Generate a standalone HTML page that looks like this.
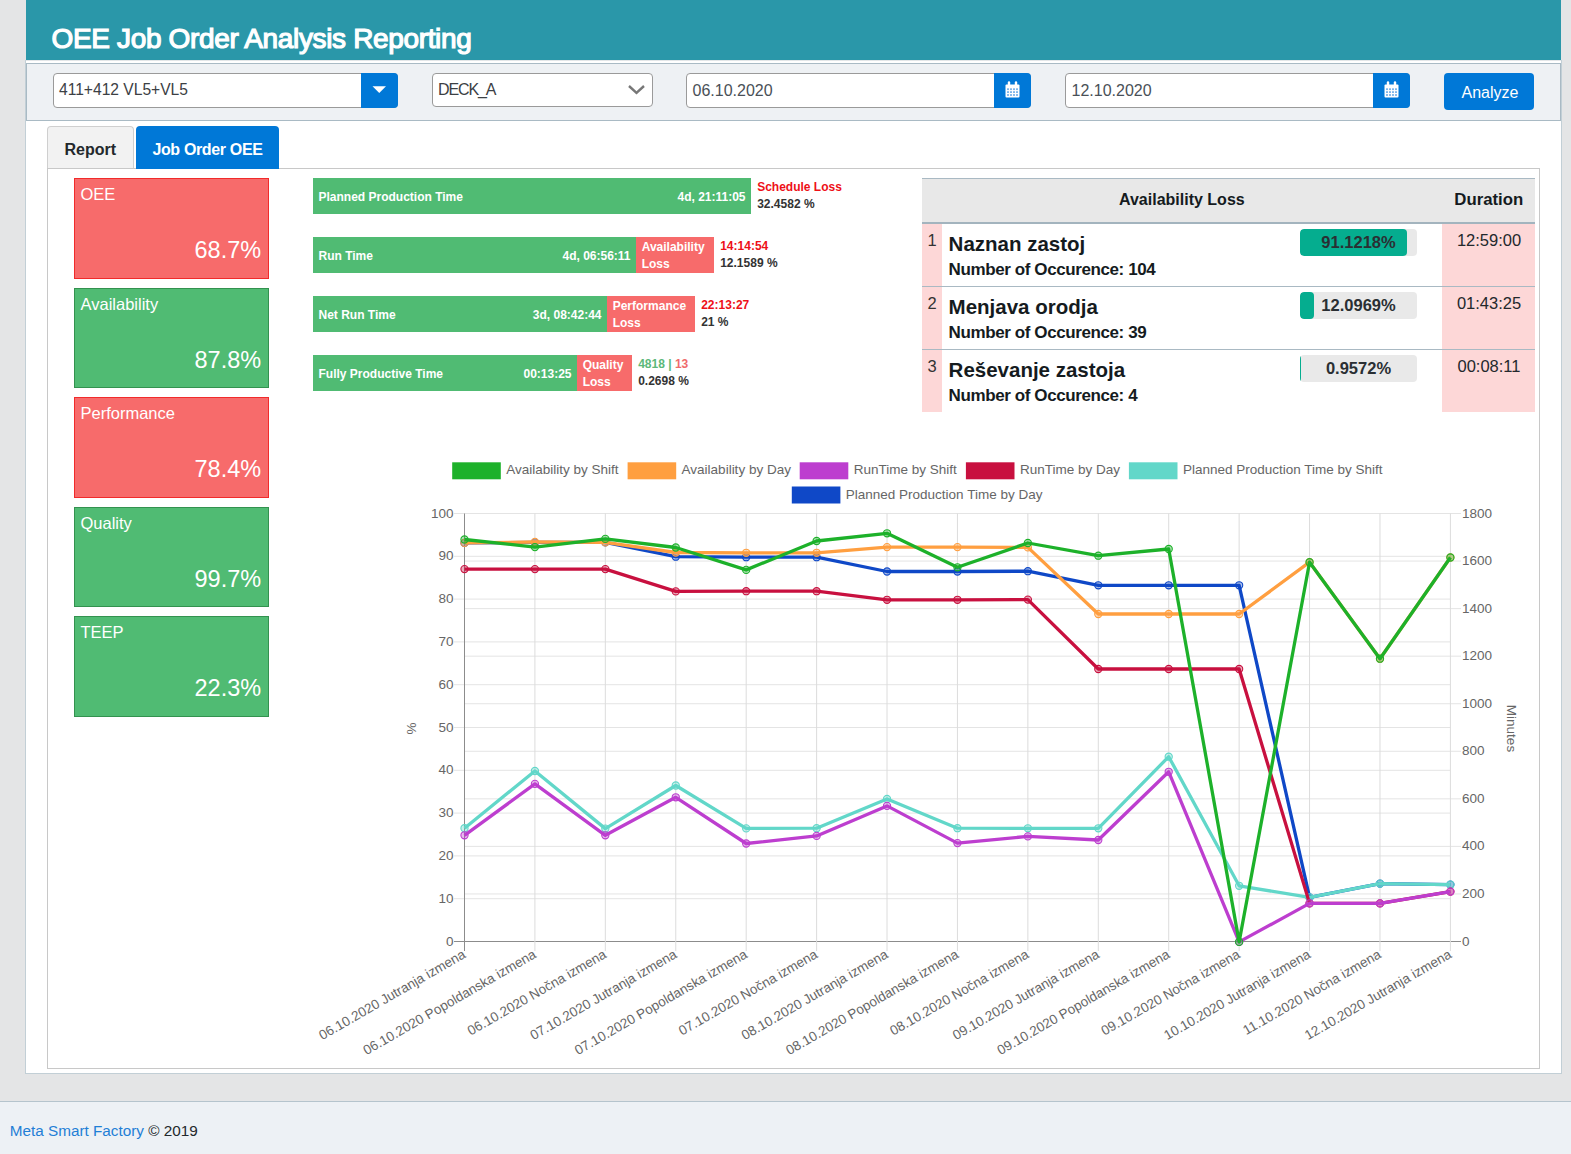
<!DOCTYPE html>
<html><head><meta charset="utf-8"><title>OEE Job Order Analysis Reporting</title>
<style>
*{box-sizing:border-box}
html,body{margin:0;padding:0}
body{width:1571px;height:1154px;position:relative;overflow:hidden;background:#e4e5e6;font-family:"Liberation Sans", sans-serif;color:#23282c}
.abs{position:absolute}
.t{position:absolute;line-height:0;white-space:nowrap}
.inp{background:#fff;border:1px solid #9a9a9a;border-radius:4px}
.btnb{background:#0078d7;border-radius:0 4px 4px 0}
.red{background:#f76b6b;border:1px solid #f12b2b}
.grn{background:#50bb73;border:1px solid #33924f}
.sg{background:#50bb73}
.sr{background:#f76b6b}
</style></head><body>
<div class="abs" style="left:26px;top:0;width:1535px;height:60px;background:#2a97a9"></div>
<div class="t" style="left:51.5px;top:39.00px;font-size:28px;font-weight:400;color:#fff;letter-spacing:-0.35px;-webkit-text-stroke:1.2px #fff;">OEE Job Order Analysis Reporting</div>
<div class="abs" style="left:25px;top:60px;width:1537px;height:1014px;background:#fff;border:1px solid #c2cfd6;border-top:none"></div>
<div class="abs" style="left:26px;top:60px;width:1535px;height:1px;background:#e3e6e8"></div>
<div class="abs" style="left:26px;top:63px;width:1535px;height:58px;background:#eef1f4;border:1px solid #a9bac4"></div>
<div class="abs inp" style="left:53px;top:73px;width:345px;height:35px"></div>
<div class="t" style="left:59px;top:90.00px;font-size:15.6px;font-weight:400;color:#3c4044;">411+412 VL5+VL5</div>
<div class="abs btnb" style="left:361px;top:73px;width:37px;height:35px"><svg width="37" height="35" style="position:absolute;left:0;top:0"><path d="M11.5 13.2 L25 13.2 L18.25 20 Z" fill="#fff"/></svg></div>
<div class="abs inp" style="left:432px;top:73px;width:221px;height:34px"><svg width="20" height="12" style="position:absolute;left:194px;top:9.5px"><path d="M2 2 L9.5 8.8 L17 2" fill="none" stroke="#777" stroke-width="2.4"/></svg></div>
<div class="t" style="left:438px;top:90.00px;font-size:16px;font-weight:400;color:#3c4044;letter-spacing:-1.1px;">DECK_A</div>
<div class="abs inp" style="left:686px;top:73px;width:345px;height:35px"></div>
<div class="t" style="left:692.5px;top:91.00px;font-size:16px;font-weight:400;color:#495057;">06.10.2020</div>
<div class="abs btnb" style="left:994px;top:73px;width:37px;height:35px"><svg width="37" height="35" style="position:absolute;left:0;top:0"><g fill="#fff"><rect x="11.5" y="11.5" width="14" height="13" rx="1"/><rect x="13.8" y="8.3" width="2.4" height="4.5" rx="1.2"/><rect x="20.8" y="8.3" width="2.4" height="4.5" rx="1.2"/></g><g fill="#7fb6ea"><rect x="13" y="15.3" width="2" height="1.8"/><rect x="16" y="15.3" width="2" height="1.8"/><rect x="19" y="15.3" width="2" height="1.8"/><rect x="22" y="15.3" width="2" height="1.8"/><rect x="13" y="18.2" width="2" height="1.8"/><rect x="16" y="18.2" width="2" height="1.8"/><rect x="19" y="18.2" width="2" height="1.8"/><rect x="22" y="18.2" width="2" height="1.8"/><rect x="13" y="21.1" width="2" height="1.8"/><rect x="16" y="21.1" width="2" height="1.8"/><rect x="19" y="21.1" width="2" height="1.8"/><rect x="22" y="21.1" width="2" height="1.8"/></g></svg></div>
<div class="abs inp" style="left:1065px;top:73px;width:345px;height:35px"></div>
<div class="t" style="left:1071.5px;top:91.00px;font-size:16px;font-weight:400;color:#495057;">12.10.2020</div>
<div class="abs btnb" style="left:1373px;top:73px;width:37px;height:35px"><svg width="37" height="35" style="position:absolute;left:0;top:0"><g fill="#fff"><rect x="11.5" y="11.5" width="14" height="13" rx="1"/><rect x="13.8" y="8.3" width="2.4" height="4.5" rx="1.2"/><rect x="20.8" y="8.3" width="2.4" height="4.5" rx="1.2"/></g><g fill="#7fb6ea"><rect x="13" y="15.3" width="2" height="1.8"/><rect x="16" y="15.3" width="2" height="1.8"/><rect x="19" y="15.3" width="2" height="1.8"/><rect x="22" y="15.3" width="2" height="1.8"/><rect x="13" y="18.2" width="2" height="1.8"/><rect x="16" y="18.2" width="2" height="1.8"/><rect x="19" y="18.2" width="2" height="1.8"/><rect x="22" y="18.2" width="2" height="1.8"/><rect x="13" y="21.1" width="2" height="1.8"/><rect x="16" y="21.1" width="2" height="1.8"/><rect x="19" y="21.1" width="2" height="1.8"/><rect x="22" y="21.1" width="2" height="1.8"/></g></svg></div>
<div class="abs" style="left:1444px;top:73px;width:90px;height:37px;background:#0078d7;border-radius:4px"></div>
<div class="t" style="left:1461.5px;top:93.00px;font-size:16px;font-weight:400;color:#fff;">Analyze</div>
<div class="abs" style="left:47px;top:168px;width:1493px;height:901px;border:1px solid #c8c8c8"></div>
<div class="abs" style="left:47px;top:126px;width:87px;height:42px;background:#f2f2f2;border:1px solid #cfcfcf;border-bottom:none;border-radius:4px 4px 0 0"></div>
<div class="t" style="left:64.5px;top:150.00px;font-size:16px;font-weight:700;color:#23282c;">Report</div>
<div class="abs" style="left:136px;top:126px;width:143px;height:43px;background:#0078d7;border-radius:4px 4px 0 0"></div>
<div class="t" style="left:152.4px;top:150.00px;font-size:16px;font-weight:700;color:#fff;letter-spacing:-0.35px;">Job Order OEE</div>
<div class="abs red" style="left:74px;top:178px;width:195px;height:101px"></div>
<div class="t" style="left:80.5px;top:194.00px;font-size:16.5px;font-weight:400;color:#fff;">OEE</div>
<div class="t" style="left:261.2px;transform:translateX(-100%);top:250.00px;font-size:23.5px;font-weight:400;color:#fff;">68.7%</div>
<div class="abs grn" style="left:74px;top:288px;width:195px;height:100px"></div>
<div class="t" style="left:80.5px;top:304.00px;font-size:16.5px;font-weight:400;color:#fff;">Availability</div>
<div class="t" style="left:261.2px;transform:translateX(-100%);top:360.00px;font-size:23.5px;font-weight:400;color:#fff;">87.8%</div>
<div class="abs red" style="left:74px;top:397px;width:195px;height:101px"></div>
<div class="t" style="left:80.5px;top:413.00px;font-size:16.5px;font-weight:400;color:#fff;">Performance</div>
<div class="t" style="left:261.2px;transform:translateX(-100%);top:469.00px;font-size:23.5px;font-weight:400;color:#fff;">78.4%</div>
<div class="abs grn" style="left:74px;top:507px;width:195px;height:100px"></div>
<div class="t" style="left:80.5px;top:523.00px;font-size:16.5px;font-weight:400;color:#fff;">Quality</div>
<div class="t" style="left:261.2px;transform:translateX(-100%);top:579.00px;font-size:23.5px;font-weight:400;color:#fff;">99.7%</div>
<div class="abs grn" style="left:74px;top:616px;width:195px;height:101px"></div>
<div class="t" style="left:80.5px;top:632.00px;font-size:16.5px;font-weight:400;color:#fff;">TEEP</div>
<div class="t" style="left:261.2px;transform:translateX(-100%);top:688.00px;font-size:23.5px;font-weight:400;color:#fff;">22.3%</div>
<div class="abs sg" style="left:313px;top:178px;width:438px;height:36px"></div>
<div class="t" style="left:318.5px;top:197.00px;font-size:12px;font-weight:700;color:#fff;">Planned Production Time</div>
<div class="t" style="left:745.5px;transform:translateX(-100%);top:197.00px;font-size:12px;font-weight:700;color:#fff;">4d, 21:11:05</div>
<div class="t" style="left:757.2px;top:187.00px;font-size:12px;font-weight:700;color:#ee1018;">Schedule Loss</div>
<div class="t" style="left:757.2px;top:204.00px;font-size:12px;font-weight:700;color:#333;">32.4582 %</div>
<div class="abs sg" style="left:313px;top:237px;width:323px;height:36px"></div>
<div class="t" style="left:318.5px;top:256.00px;font-size:12px;font-weight:700;color:#fff;">Run Time</div>
<div class="t" style="left:630.5px;transform:translateX(-100%);top:256.00px;font-size:12px;font-weight:700;color:#fff;">4d, 06:56:11</div>
<div class="abs sr" style="left:636px;top:237px;width:78px;height:36px"></div>
<div class="t" style="left:641.7px;top:247.00px;font-size:12px;font-weight:700;color:#fff;">Availability</div>
<div class="t" style="left:641.7px;top:264.00px;font-size:12px;font-weight:700;color:#fff;">Loss</div>
<div class="t" style="left:720.2px;top:246.00px;font-size:12px;font-weight:700;color:#ee1018;">14:14:54</div>
<div class="t" style="left:720.2px;top:263.00px;font-size:12px;font-weight:700;color:#333;">12.1589 %</div>
<div class="abs sg" style="left:313px;top:296px;width:294px;height:36px"></div>
<div class="t" style="left:318.5px;top:315.00px;font-size:12px;font-weight:700;color:#fff;">Net Run Time</div>
<div class="t" style="left:601.5px;transform:translateX(-100%);top:315.00px;font-size:12px;font-weight:700;color:#fff;">3d, 08:42:44</div>
<div class="abs sr" style="left:607px;top:296px;width:88px;height:36px"></div>
<div class="t" style="left:612.7px;top:306.00px;font-size:12px;font-weight:700;color:#fff;">Performance</div>
<div class="t" style="left:612.7px;top:323.00px;font-size:12px;font-weight:700;color:#fff;">Loss</div>
<div class="t" style="left:701.2px;top:305.00px;font-size:12px;font-weight:700;color:#ee1018;">22:13:27</div>
<div class="t" style="left:701.2px;top:322.00px;font-size:12px;font-weight:700;color:#333;">21 %</div>
<div class="abs sg" style="left:313px;top:355px;width:264px;height:36px"></div>
<div class="t" style="left:318.5px;top:374.00px;font-size:12px;font-weight:700;color:#fff;">Fully Productive Time</div>
<div class="t" style="left:571.5px;transform:translateX(-100%);top:374.00px;font-size:12px;font-weight:700;color:#fff;">00:13:25</div>
<div class="abs sr" style="left:577px;top:355px;width:55px;height:36px"></div>
<div class="t" style="left:582.7px;top:365.00px;font-size:12px;font-weight:700;color:#fff;">Quality</div>
<div class="t" style="left:582.7px;top:382.00px;font-size:12px;font-weight:700;color:#fff;">Loss</div>
<div class="t" style="left:638.2px;top:364.00px;font-size:12px;font-weight:700;color:#ee1018;"><span style="color:#5cb87a;font-weight:600">4818 | </span><span style="color:#f06b6b">13</span></div>
<div class="t" style="left:638.2px;top:381.00px;font-size:12px;font-weight:700;color:#333;">0.2698 %</div>
<div class="abs" style="left:922px;top:178px;width:613px;height:46px;background:#e8e8e8;border-top:1px solid #a9b9c3;border-bottom:2px solid #a3b4be"></div>
<div class="t" style="left:1119px;top:200.00px;font-size:16px;font-weight:700;color:#151b1e;">Availability Loss</div>
<div class="t" style="left:1454.3px;top:200.00px;font-size:16.8px;font-weight:700;color:#151b1e;">Duration</div>
<div class="abs" style="left:922px;top:224px;width:613px;height:63px;border-bottom:1px solid #a9b9c3;"></div>
<div class="abs" style="left:922px;top:224px;width:20px;height:62px;background:#fdd7d7"></div>
<div class="abs" style="left:1442px;top:224px;width:93px;height:62px;background:#fdd7d7"></div>
<div class="t" style="left:932px;transform:translateX(-50%);top:240.00px;font-size:16.5px;font-weight:400;color:#333;">1</div>
<div class="t" style="left:948.6px;top:244.00px;font-size:20.5px;font-weight:700;color:#151b1e;">Naznan zastoj</div>
<div class="t" style="left:948.6px;top:270.00px;font-size:17px;font-weight:700;color:#151b1e;letter-spacing:-0.4px;">Number of Occurence: 104</div>
<div class="abs" style="left:1300px;top:229px;width:117px;height:27px;background:#e9e9e9;border-radius:4px;overflow:hidden"><div style="position:absolute;left:0;top:0;bottom:0;width:106.6px;background:#05ad8f;border-radius:4px"></div></div>
<div class="t" style="left:1358.5px;transform:translateX(-50%);top:242.00px;font-size:16.5px;font-weight:700;color:#2a2f33;">91.1218%</div>
<div class="t" style="left:1489px;transform:translateX(-50%);top:240.00px;font-size:16.5px;font-weight:400;color:#23282c;">12:59:00</div>
<div class="abs" style="left:922px;top:287px;width:613px;height:63px;border-bottom:1px solid #a9b9c3;"></div>
<div class="abs" style="left:922px;top:287px;width:20px;height:62px;background:#fdd7d7"></div>
<div class="abs" style="left:1442px;top:287px;width:93px;height:62px;background:#fdd7d7"></div>
<div class="t" style="left:932px;transform:translateX(-50%);top:303.00px;font-size:16.5px;font-weight:400;color:#333;">2</div>
<div class="t" style="left:948.6px;top:307.00px;font-size:20.5px;font-weight:700;color:#151b1e;">Menjava orodja</div>
<div class="t" style="left:948.6px;top:333.00px;font-size:17px;font-weight:700;color:#151b1e;letter-spacing:-0.4px;">Number of Occurence: 39</div>
<div class="abs" style="left:1300px;top:292px;width:117px;height:27px;background:#e9e9e9;border-radius:4px;overflow:hidden"><div style="position:absolute;left:0;top:0;bottom:0;width:14.15px;background:#05ad8f;border-radius:4px"></div></div>
<div class="t" style="left:1358.5px;transform:translateX(-50%);top:305.00px;font-size:16.5px;font-weight:700;color:#2a2f33;">12.0969%</div>
<div class="t" style="left:1489px;transform:translateX(-50%);top:303.00px;font-size:16.5px;font-weight:400;color:#23282c;">01:43:25</div>
<div class="abs" style="left:922px;top:350px;width:613px;height:62px;"></div>
<div class="abs" style="left:922px;top:350px;width:20px;height:62px;background:#fdd7d7"></div>
<div class="abs" style="left:1442px;top:350px;width:93px;height:62px;background:#fdd7d7"></div>
<div class="t" style="left:932px;transform:translateX(-50%);top:366.00px;font-size:16.5px;font-weight:400;color:#333;">3</div>
<div class="t" style="left:948.6px;top:370.00px;font-size:20.5px;font-weight:700;color:#151b1e;">Reševanje zastoja</div>
<div class="t" style="left:948.6px;top:396.00px;font-size:17px;font-weight:700;color:#151b1e;letter-spacing:-0.4px;">Number of Occurence: 4</div>
<div class="abs" style="left:1300px;top:355px;width:117px;height:27px;background:#e9e9e9;border-radius:4px;overflow:hidden"><div style="position:absolute;left:0;top:0;bottom:0;width:1.2px;background:#05ad8f;border-radius:0px"></div></div>
<div class="t" style="left:1358.5px;transform:translateX(-50%);top:368.00px;font-size:16.5px;font-weight:700;color:#2a2f33;">0.9572%</div>
<div class="t" style="left:1489px;transform:translateX(-50%);top:366.00px;font-size:16.5px;font-weight:400;color:#23282c;">00:08:11</div>
<div class="abs" style="left:0;top:1101px;width:1571px;height:53px;background:#edf1f5;border-top:1px solid #b5c4cd"></div>
<div class="t" style="left:9.7px;top:1131.00px;font-size:15.3px;font-weight:400;color:#23282c;"><span style="color:#1f7fd6">Meta Smart Factory</span> © 2019</div>
<svg width="1571" height="1154" viewBox="0 0 1571 1154" style="position:absolute;left:0;top:0;font-family:"Liberation Sans", sans-serif">
<line x1="454" y1="513.50" x2="1450.40" y2="513.50" stroke="#e4e4e4" stroke-width="1"/>
<text x="453.5" y="517.60" text-anchor="end" font-size="13.5" fill="#666">100</text>
<line x1="454" y1="556.30" x2="1450.40" y2="556.30" stroke="#e4e4e4" stroke-width="1"/>
<text x="453.5" y="560.40" text-anchor="end" font-size="13.5" fill="#666">90</text>
<line x1="454" y1="599.10" x2="1450.40" y2="599.10" stroke="#e4e4e4" stroke-width="1"/>
<text x="453.5" y="603.20" text-anchor="end" font-size="13.5" fill="#666">80</text>
<line x1="454" y1="641.90" x2="1450.40" y2="641.90" stroke="#e4e4e4" stroke-width="1"/>
<text x="453.5" y="646.00" text-anchor="end" font-size="13.5" fill="#666">70</text>
<line x1="454" y1="684.70" x2="1450.40" y2="684.70" stroke="#e4e4e4" stroke-width="1"/>
<text x="453.5" y="688.80" text-anchor="end" font-size="13.5" fill="#666">60</text>
<line x1="454" y1="727.50" x2="1450.40" y2="727.50" stroke="#e4e4e4" stroke-width="1"/>
<text x="453.5" y="731.60" text-anchor="end" font-size="13.5" fill="#666">50</text>
<line x1="454" y1="770.30" x2="1450.40" y2="770.30" stroke="#e4e4e4" stroke-width="1"/>
<text x="453.5" y="774.40" text-anchor="end" font-size="13.5" fill="#666">40</text>
<line x1="454" y1="813.10" x2="1450.40" y2="813.10" stroke="#e4e4e4" stroke-width="1"/>
<text x="453.5" y="817.20" text-anchor="end" font-size="13.5" fill="#666">30</text>
<line x1="454" y1="855.90" x2="1450.40" y2="855.90" stroke="#e4e4e4" stroke-width="1"/>
<text x="453.5" y="860.00" text-anchor="end" font-size="13.5" fill="#666">20</text>
<line x1="454" y1="898.70" x2="1450.40" y2="898.70" stroke="#e4e4e4" stroke-width="1"/>
<text x="453.5" y="902.80" text-anchor="end" font-size="13.5" fill="#666">10</text>
<line x1="454" y1="941.50" x2="1450.40" y2="941.50" stroke="#8c8c8c" stroke-width="1"/>
<text x="453.5" y="945.60" text-anchor="end" font-size="13.5" fill="#666">0</text>
<line x1="464.50" y1="513.50" x2="1461" y2="513.50" stroke="#e4e4e4" stroke-width="1"/>
<text x="1462" y="517.60" font-size="13.5" fill="#666">1800</text>
<line x1="464.50" y1="561.06" x2="1461" y2="561.06" stroke="#e4e4e4" stroke-width="1"/>
<text x="1462" y="565.16" font-size="13.5" fill="#666">1600</text>
<line x1="464.50" y1="608.61" x2="1461" y2="608.61" stroke="#e4e4e4" stroke-width="1"/>
<text x="1462" y="612.71" font-size="13.5" fill="#666">1400</text>
<line x1="464.50" y1="656.17" x2="1461" y2="656.17" stroke="#e4e4e4" stroke-width="1"/>
<text x="1462" y="660.27" font-size="13.5" fill="#666">1200</text>
<line x1="464.50" y1="703.72" x2="1461" y2="703.72" stroke="#e4e4e4" stroke-width="1"/>
<text x="1462" y="707.82" font-size="13.5" fill="#666">1000</text>
<line x1="464.50" y1="751.28" x2="1461" y2="751.28" stroke="#e4e4e4" stroke-width="1"/>
<text x="1462" y="755.38" font-size="13.5" fill="#666">800</text>
<line x1="464.50" y1="798.83" x2="1461" y2="798.83" stroke="#e4e4e4" stroke-width="1"/>
<text x="1462" y="802.93" font-size="13.5" fill="#666">600</text>
<line x1="464.50" y1="846.39" x2="1461" y2="846.39" stroke="#e4e4e4" stroke-width="1"/>
<text x="1462" y="850.49" font-size="13.5" fill="#666">400</text>
<line x1="464.50" y1="893.94" x2="1461" y2="893.94" stroke="#e4e4e4" stroke-width="1"/>
<text x="1462" y="898.04" font-size="13.5" fill="#666">200</text>
<line x1="464.50" y1="941.50" x2="1461" y2="941.50" stroke="#8c8c8c" stroke-width="1"/>
<text x="1462" y="945.60" font-size="13.5" fill="#666">0</text>
<line x1="464.50" y1="513.50" x2="464.50" y2="951" stroke="#8c8c8c" stroke-width="1"/>
<line x1="534.92" y1="513.50" x2="534.92" y2="951" stroke="#dcdcdc" stroke-width="1"/>
<line x1="605.34" y1="513.50" x2="605.34" y2="951" stroke="#dcdcdc" stroke-width="1"/>
<line x1="675.76" y1="513.50" x2="675.76" y2="951" stroke="#dcdcdc" stroke-width="1"/>
<line x1="746.19" y1="513.50" x2="746.19" y2="951" stroke="#dcdcdc" stroke-width="1"/>
<line x1="816.61" y1="513.50" x2="816.61" y2="951" stroke="#dcdcdc" stroke-width="1"/>
<line x1="887.03" y1="513.50" x2="887.03" y2="951" stroke="#dcdcdc" stroke-width="1"/>
<line x1="957.45" y1="513.50" x2="957.45" y2="951" stroke="#dcdcdc" stroke-width="1"/>
<line x1="1027.87" y1="513.50" x2="1027.87" y2="951" stroke="#dcdcdc" stroke-width="1"/>
<line x1="1098.29" y1="513.50" x2="1098.29" y2="951" stroke="#dcdcdc" stroke-width="1"/>
<line x1="1168.71" y1="513.50" x2="1168.71" y2="951" stroke="#dcdcdc" stroke-width="1"/>
<line x1="1239.14" y1="513.50" x2="1239.14" y2="951" stroke="#dcdcdc" stroke-width="1"/>
<line x1="1309.56" y1="513.50" x2="1309.56" y2="951" stroke="#dcdcdc" stroke-width="1"/>
<line x1="1379.98" y1="513.50" x2="1379.98" y2="951" stroke="#dcdcdc" stroke-width="1"/>
<line x1="1450.40" y1="513.50" x2="1450.40" y2="951" stroke="#dcdcdc" stroke-width="1"/>
<text x="466.50" y="957.00" text-anchor="end" font-size="13.5" fill="#666" transform="rotate(-30 466.50 957.00)">06.10.2020 Jutranja izmena</text>
<text x="536.92" y="957.00" text-anchor="end" font-size="13.5" fill="#666" transform="rotate(-30 536.92 957.00)">06.10.2020 Popoldanska izmena</text>
<text x="607.34" y="957.00" text-anchor="end" font-size="13.5" fill="#666" transform="rotate(-30 607.34 957.00)">06.10.2020 Nočna izmena</text>
<text x="677.76" y="957.00" text-anchor="end" font-size="13.5" fill="#666" transform="rotate(-30 677.76 957.00)">07.10.2020 Jutranja izmena</text>
<text x="748.19" y="957.00" text-anchor="end" font-size="13.5" fill="#666" transform="rotate(-30 748.19 957.00)">07.10.2020 Popoldanska izmena</text>
<text x="818.61" y="957.00" text-anchor="end" font-size="13.5" fill="#666" transform="rotate(-30 818.61 957.00)">07.10.2020 Nočna izmena</text>
<text x="889.03" y="957.00" text-anchor="end" font-size="13.5" fill="#666" transform="rotate(-30 889.03 957.00)">08.10.2020 Jutranja izmena</text>
<text x="959.45" y="957.00" text-anchor="end" font-size="13.5" fill="#666" transform="rotate(-30 959.45 957.00)">08.10.2020 Popoldanska izmena</text>
<text x="1029.87" y="957.00" text-anchor="end" font-size="13.5" fill="#666" transform="rotate(-30 1029.87 957.00)">08.10.2020 Nočna izmena</text>
<text x="1100.29" y="957.00" text-anchor="end" font-size="13.5" fill="#666" transform="rotate(-30 1100.29 957.00)">09.10.2020 Jutranja izmena</text>
<text x="1170.71" y="957.00" text-anchor="end" font-size="13.5" fill="#666" transform="rotate(-30 1170.71 957.00)">09.10.2020 Popoldanska izmena</text>
<text x="1241.14" y="957.00" text-anchor="end" font-size="13.5" fill="#666" transform="rotate(-30 1241.14 957.00)">09.10.2020 Nočna izmena</text>
<text x="1311.56" y="957.00" text-anchor="end" font-size="13.5" fill="#666" transform="rotate(-30 1311.56 957.00)">10.10.2020 Jutranja izmena</text>
<text x="1381.98" y="957.00" text-anchor="end" font-size="13.5" fill="#666" transform="rotate(-30 1381.98 957.00)">11.10.2020 Nočna izmena</text>
<text x="1452.40" y="957.00" text-anchor="end" font-size="13.5" fill="#666" transform="rotate(-30 1452.40 957.00)">12.10.2020 Jutranja izmena</text>
<text x="415.5" y="728.5" text-anchor="middle" font-size="13.5" fill="#666" transform="rotate(-90 415.5 728.5)">%</text>
<text x="1507" y="728.5" text-anchor="middle" font-size="13.5" fill="#666" transform="rotate(90 1507 728.5)">Minutes</text>
<polyline points="464.50,542.90 534.92,542.40 605.34,542.40 675.76,556.70 746.19,557.20 816.61,557.20 887.03,571.50 957.45,571.50 1027.87,571.20 1098.29,585.30 1168.71,585.30 1239.14,585.30 1309.56,897.40 1379.98,883.60 1450.40,884.60" fill="none" stroke="#0f48c7" stroke-width="3.3" stroke-linejoin="round"/>
<circle cx="464.50" cy="542.90" r="3.6" fill="#0f48c7" fill-opacity="0.35" stroke="#0f48c7" stroke-width="1.1"/>
<circle cx="534.92" cy="542.40" r="3.6" fill="#0f48c7" fill-opacity="0.35" stroke="#0f48c7" stroke-width="1.1"/>
<circle cx="605.34" cy="542.40" r="3.6" fill="#0f48c7" fill-opacity="0.35" stroke="#0f48c7" stroke-width="1.1"/>
<circle cx="675.76" cy="556.70" r="3.6" fill="#0f48c7" fill-opacity="0.35" stroke="#0f48c7" stroke-width="1.1"/>
<circle cx="746.19" cy="557.20" r="3.6" fill="#0f48c7" fill-opacity="0.35" stroke="#0f48c7" stroke-width="1.1"/>
<circle cx="816.61" cy="557.20" r="3.6" fill="#0f48c7" fill-opacity="0.35" stroke="#0f48c7" stroke-width="1.1"/>
<circle cx="887.03" cy="571.50" r="3.6" fill="#0f48c7" fill-opacity="0.35" stroke="#0f48c7" stroke-width="1.1"/>
<circle cx="957.45" cy="571.50" r="3.6" fill="#0f48c7" fill-opacity="0.35" stroke="#0f48c7" stroke-width="1.1"/>
<circle cx="1027.87" cy="571.20" r="3.6" fill="#0f48c7" fill-opacity="0.35" stroke="#0f48c7" stroke-width="1.1"/>
<circle cx="1098.29" cy="585.30" r="3.6" fill="#0f48c7" fill-opacity="0.35" stroke="#0f48c7" stroke-width="1.1"/>
<circle cx="1168.71" cy="585.30" r="3.6" fill="#0f48c7" fill-opacity="0.35" stroke="#0f48c7" stroke-width="1.1"/>
<circle cx="1239.14" cy="585.30" r="3.6" fill="#0f48c7" fill-opacity="0.35" stroke="#0f48c7" stroke-width="1.1"/>
<circle cx="1309.56" cy="897.40" r="3.6" fill="#0f48c7" fill-opacity="0.35" stroke="#0f48c7" stroke-width="1.1"/>
<circle cx="1379.98" cy="883.60" r="3.6" fill="#0f48c7" fill-opacity="0.35" stroke="#0f48c7" stroke-width="1.1"/>
<circle cx="1450.40" cy="884.60" r="3.6" fill="#0f48c7" fill-opacity="0.35" stroke="#0f48c7" stroke-width="1.1"/>
<polyline points="464.50,828.20 534.92,771.00 605.34,828.60 675.76,785.50 746.19,828.40 816.61,828.20 887.03,799.00 957.45,828.20 1027.87,828.30 1098.29,828.30 1168.71,756.70 1239.14,885.80 1309.56,897.40 1379.98,883.60 1450.40,884.60" fill="none" stroke="#62d7c9" stroke-width="3.3" stroke-linejoin="round"/>
<circle cx="464.50" cy="828.20" r="3.6" fill="#62d7c9" fill-opacity="0.35" stroke="#62d7c9" stroke-width="1.1"/>
<circle cx="534.92" cy="771.00" r="3.6" fill="#62d7c9" fill-opacity="0.35" stroke="#62d7c9" stroke-width="1.1"/>
<circle cx="605.34" cy="828.60" r="3.6" fill="#62d7c9" fill-opacity="0.35" stroke="#62d7c9" stroke-width="1.1"/>
<circle cx="675.76" cy="785.50" r="3.6" fill="#62d7c9" fill-opacity="0.35" stroke="#62d7c9" stroke-width="1.1"/>
<circle cx="746.19" cy="828.40" r="3.6" fill="#62d7c9" fill-opacity="0.35" stroke="#62d7c9" stroke-width="1.1"/>
<circle cx="816.61" cy="828.20" r="3.6" fill="#62d7c9" fill-opacity="0.35" stroke="#62d7c9" stroke-width="1.1"/>
<circle cx="887.03" cy="799.00" r="3.6" fill="#62d7c9" fill-opacity="0.35" stroke="#62d7c9" stroke-width="1.1"/>
<circle cx="957.45" cy="828.20" r="3.6" fill="#62d7c9" fill-opacity="0.35" stroke="#62d7c9" stroke-width="1.1"/>
<circle cx="1027.87" cy="828.30" r="3.6" fill="#62d7c9" fill-opacity="0.35" stroke="#62d7c9" stroke-width="1.1"/>
<circle cx="1098.29" cy="828.30" r="3.6" fill="#62d7c9" fill-opacity="0.35" stroke="#62d7c9" stroke-width="1.1"/>
<circle cx="1168.71" cy="756.70" r="3.6" fill="#62d7c9" fill-opacity="0.35" stroke="#62d7c9" stroke-width="1.1"/>
<circle cx="1239.14" cy="885.80" r="3.6" fill="#62d7c9" fill-opacity="0.35" stroke="#62d7c9" stroke-width="1.1"/>
<circle cx="1309.56" cy="897.40" r="3.6" fill="#62d7c9" fill-opacity="0.35" stroke="#62d7c9" stroke-width="1.1"/>
<circle cx="1379.98" cy="883.60" r="3.6" fill="#62d7c9" fill-opacity="0.35" stroke="#62d7c9" stroke-width="1.1"/>
<circle cx="1450.40" cy="884.60" r="3.6" fill="#62d7c9" fill-opacity="0.35" stroke="#62d7c9" stroke-width="1.1"/>
<polyline points="464.50,569.10 534.92,569.10 605.34,569.10 675.76,591.40 746.19,591.20 816.61,591.20 887.03,599.80 957.45,599.80 1027.87,599.60 1098.29,669.00 1168.71,669.00 1239.14,669.00 1309.56,903.40 1379.98,903.40 1450.40,891.60" fill="none" stroke="#c8103f" stroke-width="3.3" stroke-linejoin="round"/>
<circle cx="464.50" cy="569.10" r="3.6" fill="#c8103f" fill-opacity="0.35" stroke="#c8103f" stroke-width="1.1"/>
<circle cx="534.92" cy="569.10" r="3.6" fill="#c8103f" fill-opacity="0.35" stroke="#c8103f" stroke-width="1.1"/>
<circle cx="605.34" cy="569.10" r="3.6" fill="#c8103f" fill-opacity="0.35" stroke="#c8103f" stroke-width="1.1"/>
<circle cx="675.76" cy="591.40" r="3.6" fill="#c8103f" fill-opacity="0.35" stroke="#c8103f" stroke-width="1.1"/>
<circle cx="746.19" cy="591.20" r="3.6" fill="#c8103f" fill-opacity="0.35" stroke="#c8103f" stroke-width="1.1"/>
<circle cx="816.61" cy="591.20" r="3.6" fill="#c8103f" fill-opacity="0.35" stroke="#c8103f" stroke-width="1.1"/>
<circle cx="887.03" cy="599.80" r="3.6" fill="#c8103f" fill-opacity="0.35" stroke="#c8103f" stroke-width="1.1"/>
<circle cx="957.45" cy="599.80" r="3.6" fill="#c8103f" fill-opacity="0.35" stroke="#c8103f" stroke-width="1.1"/>
<circle cx="1027.87" cy="599.60" r="3.6" fill="#c8103f" fill-opacity="0.35" stroke="#c8103f" stroke-width="1.1"/>
<circle cx="1098.29" cy="669.00" r="3.6" fill="#c8103f" fill-opacity="0.35" stroke="#c8103f" stroke-width="1.1"/>
<circle cx="1168.71" cy="669.00" r="3.6" fill="#c8103f" fill-opacity="0.35" stroke="#c8103f" stroke-width="1.1"/>
<circle cx="1239.14" cy="669.00" r="3.6" fill="#c8103f" fill-opacity="0.35" stroke="#c8103f" stroke-width="1.1"/>
<circle cx="1309.56" cy="903.40" r="3.6" fill="#c8103f" fill-opacity="0.35" stroke="#c8103f" stroke-width="1.1"/>
<circle cx="1379.98" cy="903.40" r="3.6" fill="#c8103f" fill-opacity="0.35" stroke="#c8103f" stroke-width="1.1"/>
<circle cx="1450.40" cy="891.60" r="3.6" fill="#c8103f" fill-opacity="0.35" stroke="#c8103f" stroke-width="1.1"/>
<polyline points="464.50,835.30 534.92,783.90 605.34,835.30 675.76,797.30 746.19,843.50 816.61,835.90 887.03,805.90 957.45,843.10 1027.87,836.40 1098.29,840.00 1168.71,771.80 1239.14,941.90 1309.56,903.40 1379.98,903.40 1450.40,891.60" fill="none" stroke="#bd3ecf" stroke-width="3.3" stroke-linejoin="round"/>
<circle cx="464.50" cy="835.30" r="3.6" fill="#bd3ecf" fill-opacity="0.35" stroke="#bd3ecf" stroke-width="1.1"/>
<circle cx="534.92" cy="783.90" r="3.6" fill="#bd3ecf" fill-opacity="0.35" stroke="#bd3ecf" stroke-width="1.1"/>
<circle cx="605.34" cy="835.30" r="3.6" fill="#bd3ecf" fill-opacity="0.35" stroke="#bd3ecf" stroke-width="1.1"/>
<circle cx="675.76" cy="797.30" r="3.6" fill="#bd3ecf" fill-opacity="0.35" stroke="#bd3ecf" stroke-width="1.1"/>
<circle cx="746.19" cy="843.50" r="3.6" fill="#bd3ecf" fill-opacity="0.35" stroke="#bd3ecf" stroke-width="1.1"/>
<circle cx="816.61" cy="835.90" r="3.6" fill="#bd3ecf" fill-opacity="0.35" stroke="#bd3ecf" stroke-width="1.1"/>
<circle cx="887.03" cy="805.90" r="3.6" fill="#bd3ecf" fill-opacity="0.35" stroke="#bd3ecf" stroke-width="1.1"/>
<circle cx="957.45" cy="843.10" r="3.6" fill="#bd3ecf" fill-opacity="0.35" stroke="#bd3ecf" stroke-width="1.1"/>
<circle cx="1027.87" cy="836.40" r="3.6" fill="#bd3ecf" fill-opacity="0.35" stroke="#bd3ecf" stroke-width="1.1"/>
<circle cx="1098.29" cy="840.00" r="3.6" fill="#bd3ecf" fill-opacity="0.35" stroke="#bd3ecf" stroke-width="1.1"/>
<circle cx="1168.71" cy="771.80" r="3.6" fill="#bd3ecf" fill-opacity="0.35" stroke="#bd3ecf" stroke-width="1.1"/>
<circle cx="1239.14" cy="941.90" r="3.6" fill="#bd3ecf" fill-opacity="0.35" stroke="#bd3ecf" stroke-width="1.1"/>
<circle cx="1309.56" cy="903.40" r="3.6" fill="#bd3ecf" fill-opacity="0.35" stroke="#bd3ecf" stroke-width="1.1"/>
<circle cx="1379.98" cy="903.40" r="3.6" fill="#bd3ecf" fill-opacity="0.35" stroke="#bd3ecf" stroke-width="1.1"/>
<circle cx="1450.40" cy="891.60" r="3.6" fill="#bd3ecf" fill-opacity="0.35" stroke="#bd3ecf" stroke-width="1.1"/>
<polyline points="464.50,542.90 534.92,542.00 605.34,542.40 675.76,552.50 746.19,552.80 816.61,552.80 887.03,547.10 957.45,547.10 1027.87,547.40 1098.29,614.00 1168.71,614.00 1239.14,614.00 1309.56,562.20 1379.98,658.70 1450.40,557.50" fill="none" stroke="#ff9f40" stroke-width="3.3" stroke-linejoin="round"/>
<circle cx="464.50" cy="542.90" r="3.6" fill="#ff9f40" fill-opacity="0.35" stroke="#ff9f40" stroke-width="1.1"/>
<circle cx="534.92" cy="542.00" r="3.6" fill="#ff9f40" fill-opacity="0.35" stroke="#ff9f40" stroke-width="1.1"/>
<circle cx="605.34" cy="542.40" r="3.6" fill="#ff9f40" fill-opacity="0.35" stroke="#ff9f40" stroke-width="1.1"/>
<circle cx="675.76" cy="552.50" r="3.6" fill="#ff9f40" fill-opacity="0.35" stroke="#ff9f40" stroke-width="1.1"/>
<circle cx="746.19" cy="552.80" r="3.6" fill="#ff9f40" fill-opacity="0.35" stroke="#ff9f40" stroke-width="1.1"/>
<circle cx="816.61" cy="552.80" r="3.6" fill="#ff9f40" fill-opacity="0.35" stroke="#ff9f40" stroke-width="1.1"/>
<circle cx="887.03" cy="547.10" r="3.6" fill="#ff9f40" fill-opacity="0.35" stroke="#ff9f40" stroke-width="1.1"/>
<circle cx="957.45" cy="547.10" r="3.6" fill="#ff9f40" fill-opacity="0.35" stroke="#ff9f40" stroke-width="1.1"/>
<circle cx="1027.87" cy="547.40" r="3.6" fill="#ff9f40" fill-opacity="0.35" stroke="#ff9f40" stroke-width="1.1"/>
<circle cx="1098.29" cy="614.00" r="3.6" fill="#ff9f40" fill-opacity="0.35" stroke="#ff9f40" stroke-width="1.1"/>
<circle cx="1168.71" cy="614.00" r="3.6" fill="#ff9f40" fill-opacity="0.35" stroke="#ff9f40" stroke-width="1.1"/>
<circle cx="1239.14" cy="614.00" r="3.6" fill="#ff9f40" fill-opacity="0.35" stroke="#ff9f40" stroke-width="1.1"/>
<circle cx="1309.56" cy="562.20" r="3.6" fill="#ff9f40" fill-opacity="0.35" stroke="#ff9f40" stroke-width="1.1"/>
<circle cx="1379.98" cy="658.70" r="3.6" fill="#ff9f40" fill-opacity="0.35" stroke="#ff9f40" stroke-width="1.1"/>
<circle cx="1450.40" cy="557.50" r="3.6" fill="#ff9f40" fill-opacity="0.35" stroke="#ff9f40" stroke-width="1.1"/>
<polyline points="464.50,539.50 534.92,547.10 605.34,538.90 675.76,547.50 746.19,569.90 816.61,541.00 887.03,533.30 957.45,567.30 1027.87,543.00 1098.29,555.70 1168.71,549.00 1239.14,941.90 1309.56,562.20 1379.98,658.70 1450.40,557.50" fill="none" stroke="#1db12a" stroke-width="3.3" stroke-linejoin="round"/>
<circle cx="464.50" cy="539.50" r="3.6" fill="#1db12a" fill-opacity="0.35" stroke="#1db12a" stroke-width="1.1"/>
<circle cx="534.92" cy="547.10" r="3.6" fill="#1db12a" fill-opacity="0.35" stroke="#1db12a" stroke-width="1.1"/>
<circle cx="605.34" cy="538.90" r="3.6" fill="#1db12a" fill-opacity="0.35" stroke="#1db12a" stroke-width="1.1"/>
<circle cx="675.76" cy="547.50" r="3.6" fill="#1db12a" fill-opacity="0.35" stroke="#1db12a" stroke-width="1.1"/>
<circle cx="746.19" cy="569.90" r="3.6" fill="#1db12a" fill-opacity="0.35" stroke="#1db12a" stroke-width="1.1"/>
<circle cx="816.61" cy="541.00" r="3.6" fill="#1db12a" fill-opacity="0.35" stroke="#1db12a" stroke-width="1.1"/>
<circle cx="887.03" cy="533.30" r="3.6" fill="#1db12a" fill-opacity="0.35" stroke="#1db12a" stroke-width="1.1"/>
<circle cx="957.45" cy="567.30" r="3.6" fill="#1db12a" fill-opacity="0.35" stroke="#1db12a" stroke-width="1.1"/>
<circle cx="1027.87" cy="543.00" r="3.6" fill="#1db12a" fill-opacity="0.35" stroke="#1db12a" stroke-width="1.1"/>
<circle cx="1098.29" cy="555.70" r="3.6" fill="#1db12a" fill-opacity="0.35" stroke="#1db12a" stroke-width="1.1"/>
<circle cx="1168.71" cy="549.00" r="3.6" fill="#1db12a" fill-opacity="0.35" stroke="#1db12a" stroke-width="1.1"/>
<circle cx="1239.14" cy="941.90" r="3.6" fill="#1db12a" fill-opacity="0.35" stroke="#1db12a" stroke-width="1.1"/>
<circle cx="1309.56" cy="562.20" r="3.6" fill="#1db12a" fill-opacity="0.35" stroke="#1db12a" stroke-width="1.1"/>
<circle cx="1379.98" cy="658.70" r="3.6" fill="#1db12a" fill-opacity="0.35" stroke="#1db12a" stroke-width="1.1"/>
<circle cx="1450.40" cy="557.50" r="3.6" fill="#1db12a" fill-opacity="0.35" stroke="#1db12a" stroke-width="1.1"/>
<rect x="452.2" y="462.3" width="48.6" height="17" fill="#1db12a"/>
<text x="506.2" y="474.3" font-size="13.5" fill="#666">Availability by Shift</text>
<rect x="627.6" y="462.3" width="48.6" height="17" fill="#ff9f40"/>
<text x="681.6" y="474.3" font-size="13.5" fill="#666">Availability by Day</text>
<rect x="799.7" y="462.3" width="48.6" height="17" fill="#bd3ecf"/>
<text x="853.7" y="474.3" font-size="13.5" fill="#666">RunTime by Shift</text>
<rect x="965.9" y="462.3" width="48.6" height="17" fill="#c8103f"/>
<text x="1019.9" y="474.3" font-size="13.5" fill="#666">RunTime by Day</text>
<rect x="1128.9" y="462.3" width="48.6" height="17" fill="#62d7c9"/>
<text x="1182.9" y="474.3" font-size="13.5" fill="#666">Planned Production Time by Shift</text>
<rect x="791.8" y="486.5" width="48.6" height="17" fill="#0f48c7"/>
<text x="845.8" y="498.5" font-size="13.5" fill="#666">Planned Production Time by Day</text>
</svg>
</body></html>
